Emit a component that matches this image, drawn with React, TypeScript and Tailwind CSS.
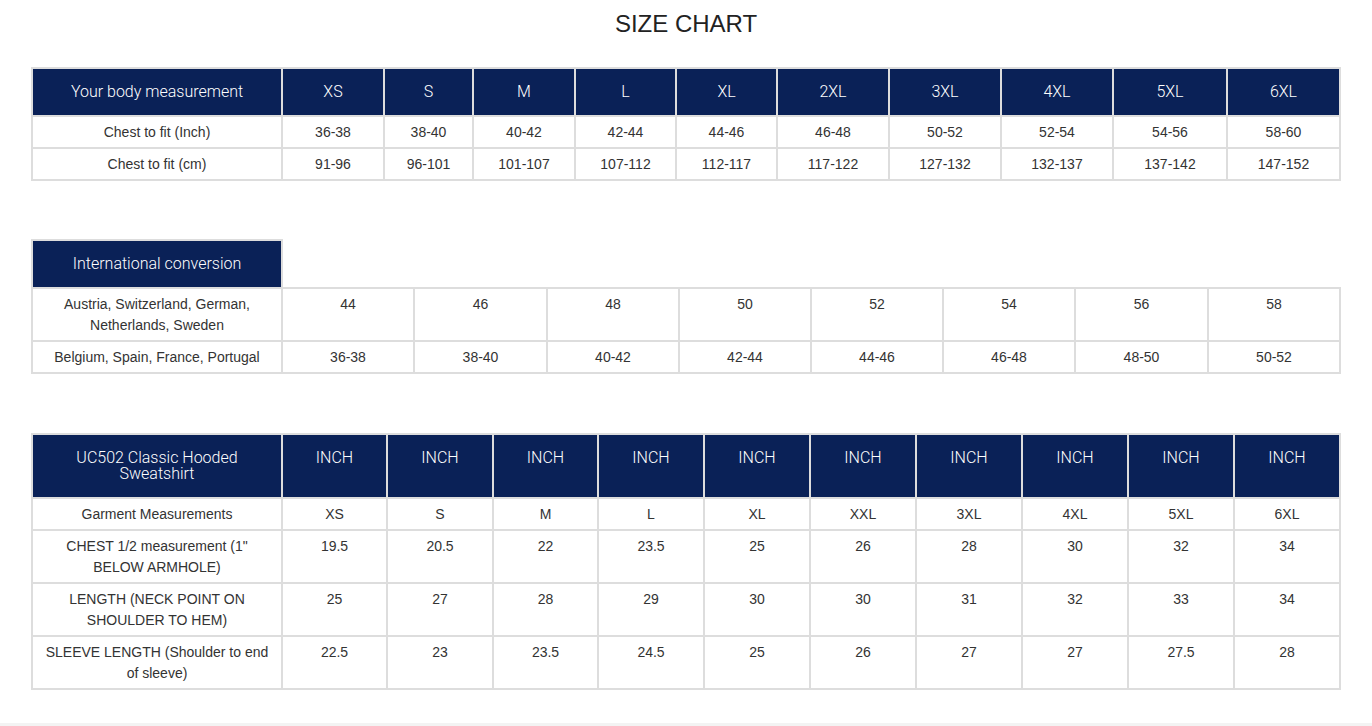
import React from 'react';

const bodySizes = ['XS', 'S', 'M', 'L', 'XL', '2XL', '3XL', '4XL', '5XL', '6XL'];
const bodyCols = [250, 102, 89, 102, 101, 101, 112, 112, 112, 114, 113];
const bodyRows = [
  { label: 'Chest to fit (Inch)', values: ['36-38', '38-40', '40-42', '42-44', '44-46', '46-48', '50-52', '52-54', '54-56', '58-60'] },
  { label: 'Chest to fit (cm)', values: ['91-96', '96-101', '101-107', '107-112', '112-117', '117-122', '127-132', '132-137', '137-142', '147-152'] },
];

const convCols = [250, 132, 133, 132, 132, 132, 132, 133, 132];
const convRows = [
  { label: 'Austria, Switzerland, German, Netherlands, Sweden', values: ['44', '46', '48', '50', '52', '54', '56', '58'] },
  { label: 'Belgium, Spain, France, Portugal', values: ['36-38', '38-40', '40-42', '42-44', '44-46', '46-48', '48-50', '50-52'] },
];

const garmentCols = [250, 105, 106, 105, 106, 106, 106, 106, 106, 106, 106];
const garmentRows = [
  { label: 'Garment Measurements', values: ['XS', 'S', 'M', 'L', 'XL', 'XXL', '3XL', '4XL', '5XL', '6XL'] },
  { label: 'CHEST 1/2 measurement (1" BELOW ARMHOLE)', values: ['19.5', '20.5', '22', '23.5', '25', '26', '28', '30', '32', '34'] },
  { label: 'LENGTH (NECK POINT ON SHOULDER TO HEM)', values: ['25', '27', '28', '29', '30', '30', '31', '32', '33', '34'] },
  { label: 'SLEEVE LENGTH (Shoulder to end of sleeve)', values: ['22.5', '23', '23.5', '24.5', '25', '26', '27', '27', '27.5', '28'] },
];

// header cells use a light face, like the thin Helvetica in the chart
const th = "border-2 border-[#dddddd] bg-[#0a2157] text-white font-['Roboto',sans-serif] font-light text-[16px] leading-[16px] pt-[15px] pb-[15px] px-3 align-top text-center";
const td = 'border-2 border-[#dddddd] text-[#333333] text-[14px] leading-[21px] pt-[5px] pb-[4px] px-3 align-top text-center';

const Cols = ({ widths }: { widths: number[] }) => (
  <colgroup>
    {widths.map((w, i) => (
      <col key={i} style={{ width: w }} />
    ))}
  </colgroup>
);

const App: React.FC = () => {
  return (
    <div className="min-h-[726px] bg-white font-['Liberation_Sans',Arial,sans-serif] flex flex-col">
      <h1 className="pt-[10px] text-center text-[24px] leading-[28px] text-[#222222] font-normal">SIZE CHART</h1>

      {/* body measurement */}
      <div className="mt-[29px] pl-[31px]">
        <table className="table-fixed border-collapse w-[1308px]">
          <Cols widths={bodyCols} />
          <thead>
            <tr>
              <th className={th}>Your body measurement</th>
              {bodySizes.map((s) => (
                <th key={s} className={th}>{s}</th>
              ))}
            </tr>
          </thead>
          <tbody>
            {bodyRows.map((r) => (
              <tr key={r.label}>
                <td className={td}>{r.label}</td>
                {r.values.map((v, i) => (
                  <td key={i} className={td}>{v}</td>
                ))}
              </tr>
            ))}
          </tbody>
        </table>
      </div>

      {/* international conversion */}
      <div className="mt-[58px] pl-[31px]">
        <table className="table-fixed border-collapse w-[1308px]">
          <Cols widths={convCols} />
          <thead>
            <tr>
              <th className={th}>International conversion</th>
              <th colSpan={8} className="border-0"></th>
            </tr>
          </thead>
          <tbody>
            {convRows.map((r) => (
              <tr key={r.label}>
                <td className={td}>{r.label}</td>
                {r.values.map((v, i) => (
                  <td key={i} className={td}>{v}</td>
                ))}
              </tr>
            ))}
          </tbody>
        </table>
      </div>

      {/* garment */}
      <div className="mt-[59px] pl-[31px]">
        <table className="table-fixed border-collapse w-[1308px]">
          <Cols widths={garmentCols} />
          <thead>
            <tr>
              <th className={th}>UC502 Classic Hooded Sweatshirt</th>
              {garmentCols.slice(1).map((_, i) => (
                <th key={i} className={th}>INCH</th>
              ))}
            </tr>
          </thead>
          <tbody>
            {garmentRows.map((r) => (
              <tr key={r.label}>
                <td className={td}>{r.label}</td>
                {r.values.map((v, i) => (
                  <td key={i} className={td}>{v}</td>
                ))}
              </tr>
            ))}
          </tbody>
        </table>
      </div>

      <div className="mt-auto h-[3px] bg-[#f3f3f3]" />
    </div>
  );
};

export default App;
